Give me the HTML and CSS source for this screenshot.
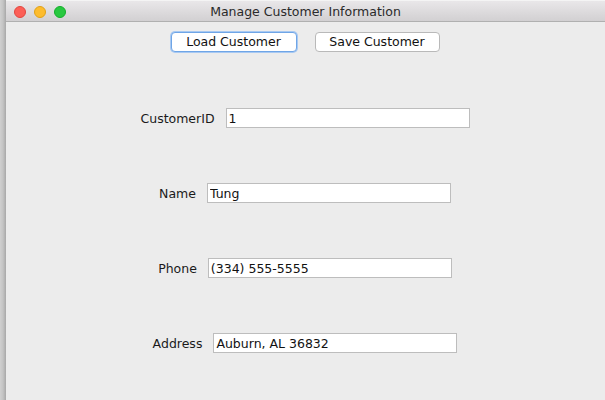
FILE: index.html
```html
<!DOCTYPE html>
<html>
<head>
<meta charset="utf-8">
<title>Manage Customer Information</title>
<link rel="stylesheet" href="styles.css">
</head>
<body>
<div class="desk">
  <div class="shadow"></div>
  <div class="window">
    <div class="titlebar">
      <div class="lights">
        <span class="light red"></span>
        <span class="light yellow"></span>
        <span class="light green"></span>
      </div>
      <div class="title">Manage Customer Information</div>
    </div>
    <div class="content">
      <div class="buttons">
        <button class="btn focused">Load Customer</button>
        <button class="btn">Save Customer</button>
      </div>
      <div class="form">
        <div class="row"><span class="label">CustomerID</span><input class="field" value="1"></div>
        <div class="row"><span class="label">Name</span><input class="field" value="Tung"></div>
        <div class="row"><span class="label">Phone</span><input class="field" value="(334) 555-5555"></div>
        <div class="row"><span class="label">Address</span><input class="field" value="Auburn, AL 36832"></div>
      </div>
    </div>
  </div>
</div>
</body>
</html>
```

FILE: styles.css
```css
html, body {
  margin: 0;
  padding: 0;
  width: 605px;
  height: 400px;
  overflow: hidden;
  background: #ececec;
  font-family: "DejaVu Sans", "Liberation Sans", sans-serif;
}
.desk {
  display: flex;
  height: 400px;
}
.shadow {
  width: 6px;
  flex: none;
  background: linear-gradient(to right, #d0d0d0, #c4c4c4 50%, #a8a8a8);
}
.window {
  flex: 1;
  display: flex;
  flex-direction: column;
  background: #ececec;
}
.titlebar {
  position: relative;
  height: 22px;
  flex: none;
  border-top: 1px solid #f4f4f4;
  box-sizing: border-box;
  background: linear-gradient(to bottom, #e9e7e9, #d2d0d2);
  border-bottom: 1px solid #b0b0b0;
  display: flex;
  align-items: center;
  justify-content: center;
}
.lights {
  position: absolute;
  left: 8px;
  top: 5px;
  display: flex;
  gap: 8px;
}
.light {
  width: 12px;
  height: 12px;
  border-radius: 50%;
  box-sizing: border-box;
}
.red { background: #fc5f57; border: 1px solid #e2463f; }
.yellow { background: #fdbc2e; border: 1px solid #e1a116; }
.green { background: #28c840; border: 1px solid #14ae2a; }
.title {
  font-size: 12.5px;
  color: #2a2a2a;
}
.content {
  flex: 1;
  display: flex;
  flex-direction: column;
}
.buttons {
  display: flex;
  justify-content: center;
  gap: 18px;
  padding-top: 10px;
  padding-right: 1px;
}
.btn {
  font-family: "DejaVu Sans", "Liberation Sans", sans-serif;
  font-size: 12.5px;
  color: #111;
  background: #fff;
  border: 1px solid #b9b9b9;
  border-radius: 4px;
  height: 20px;
  width: 125px;
  padding: 0;
  line-height: 18px;
}
.btn.focused {
  width: 126px;
  border: 1px solid #6fa5e6;
  box-shadow: 0 0 0 1px #a8c9f2;
}
.form {
  display: flex;
  flex-direction: column;
  gap: 55px;
  padding-top: 56px;
  padding-right: 1px;
}
.row {
  display: flex;
  justify-content: center;
  align-items: center;
  gap: 11px;
  height: 20px;
  font-size: 12.5px;
  color: #1a1a1a;
}
.field {
  width: 244px;
  height: 20px;
  box-sizing: border-box;
  border: 1px solid #bdbdbd;
  background: #fff;
  font-family: "DejaVu Sans", "Liberation Sans", sans-serif;
  font-size: 12.5px;
  color: #111;
  padding: 0 2px;
  margin: 0;
  outline: none;
}
```
